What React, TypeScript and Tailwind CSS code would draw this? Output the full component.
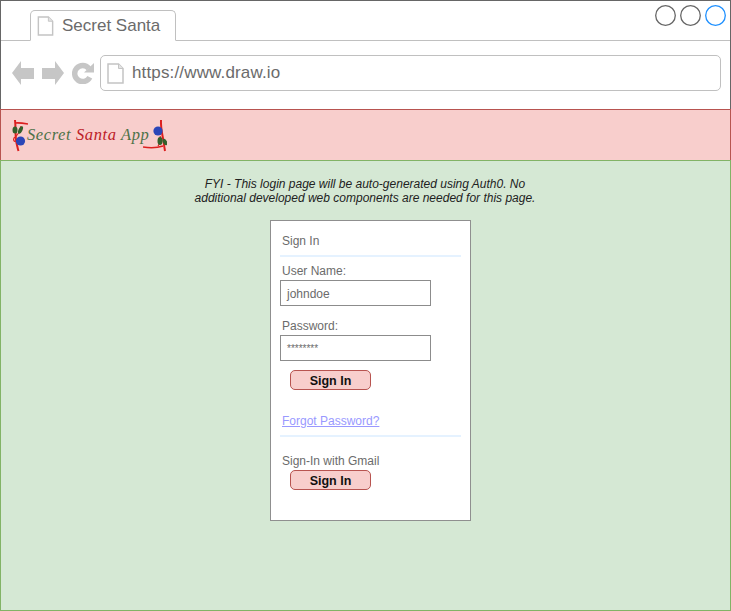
const font = "[font-family:'Liberation_Sans',Arial,sans-serif]";

const PageIcon = ({ className }: { className: string }) => (
    <svg viewBox="0 0 17 21" className={className} fill="none" stroke="#c4c4c4" strokeWidth="1.5">
        <path d="M1 1h10.5l4.5 4.5V20H1z" fill="#fff" />
        <path d="M11.5 1v4.5H16" fill="#e4e4e4" strokeWidth="1" />
    </svg>
);

const NavIcons = () => (
    <div className="flex items-center gap-[8px] ml-[11px] mr-[6px]">
        <svg viewBox="0 0 22 24" className="w-[22px] h-[24px]">
            <path d="M0 12 9 0v7h13v11H9v6z" fill="#c6c6c6" />
        </svg>
        <svg viewBox="0 0 22 24" className="w-[22px] h-[24px]">
            <path d="M22 12 13 0v7H0v11h13v6z" fill="#c6c6c6" />
        </svg>
        <svg viewBox="0 0 22 22" className="w-[22px] h-[22px]">
            <path d="M17.800 15.200a8 8 0 1 1-1-8.800" fill="none" stroke="#c6c6c6" strokeWidth="5.500" />
            <path d="M12 10.500 22 1v9.500z" fill="#c6c6c6" />
        </svg>
    </div>
);

const WindowButton = ({ active }: { active?: boolean }) => (
    <svg viewBox="0 0 21 21" className="w-[21px] h-[21px]" fill="none">
        <circle cx="10.500" cy="10.500" r="9.800" stroke={active ? '#1e90ff' : '#666666'} strokeWidth="1.300" />
    </svg>
);

const LeftRibbon = () => (
    <svg viewBox="0 0 16 33" className="w-[16px] h-[33px] shrink-0">
        <path d="M3 1c1 8 0 16 1.500 23 .8 3 1 5 2 8" fill="none" stroke="#dc1f1f" strokeWidth="2" />
        <path d="M3.500 4C7 3.500 10 4 16 5" fill="none" stroke="#dc1f1f" strokeWidth="1.600" />
        <path d="M9 7C8 12 5 17 2 19c-1 2 0 4 2 3" fill="none" stroke="#dc1f1f" strokeWidth="1.200" />
        <ellipse cx="3" cy="11" rx="2.500" ry="3.500" fill="#33602c" />
        <ellipse cx="8.500" cy="11" rx="2" ry="4" transform="rotate(25 8.500 11)" fill="#33602c" />
        <circle cx="8.500" cy="22" r="4.600" fill="#2b46b8" />
    </svg>
);

const RightRibbon = () => (
    <svg viewBox="0 0 24 33" className="w-[24px] h-[33px] shrink-0">
        <path d="M18 1c-.5 8 1.500 15 2.500 21 .5 4 .8 6 1.500 10" fill="none" stroke="#dc1f1f" strokeWidth="2" />
        <path d="M0 28c6 1 14 1 20-1" fill="none" stroke="#dc1f1f" strokeWidth="1.700" />
        <path d="M17 17c2 3 1 6-2 10" fill="none" stroke="#dc1f1f" strokeWidth="1.200" />
        <ellipse cx="17" cy="22" rx="2.500" ry="4" fill="#33602c" />
        <ellipse cx="22" cy="23" rx="2" ry="3.500" transform="rotate(-25 22 23)" fill="#33602c" />
        <circle cx="15" cy="12" r="4.600" fill="#2b46b8" />
    </svg>
);

const Logo = () => (
    <div className="flex items-center h-[36px] w-[156px]">
        <LeftRibbon />
        <div className="-ml-[1px] mt-[1px] w-[123px] shrink-0 whitespace-nowrap text-[16.500px] tracking-[0.6px] italic text-[#4d7248] [font-family:'Liberation_Serif',serif]">
            Secret <span className="text-[#bd2027]">Santa</span> App
        </div>
        <div className="-ml-[7px]">
            <RightRibbon />
        </div>
    </div>
);

const Divider = ({ className }: { className: string }) => (
    <div className={`h-[2px] bg-[#e5f2ff] mx-[9px] ${className}`} />
);

const Label = ({ children, className = '' }: { children: string; className?: string }) => (
    <div className={`text-[12px] leading-[14px] text-[#6b6b6b] ml-[11px] ${className}`}>{children}</div>
);

const Field = ({ value, className = '' }: { value: string; className?: string }) => (
    <div className={`w-[151px] h-[26px] ml-[9px] border border-[#8c8c8c] flex items-center pl-[6px] text-[#6b6b6b] ${className}`}>
        {value}
    </div>
);

const SignInButton = ({ className = '' }: { className?: string }) => (
    <div className={`w-[81px] h-[20px] ml-[19px] pt-[2px] rounded-[5px] bg-[#f8cecc] border border-[#b85450] flex items-center justify-center text-[12.500px] font-bold text-[#111111] ${className}`}>
        Sign In
    </div>
);

export default function App() {
    return (
        <div className={`w-[731px] h-[611px] flex flex-col bg-white overflow-hidden ${font}`}>
            {/* Browser chrome */}
            <div className="h-[109px] shrink-0 border-t border-l border-r border-[#666666] flex flex-col">
                <div className="h-[40px] shrink-0 border-b border-[#c0c0c0] flex items-end justify-between">
                    <div className="w-[146px] h-[31px] ml-[29px] -mb-[1px] bg-white border border-b-white border-[#c0c0c0] rounded-t-[5px] flex items-center pl-[6px] gap-[8px]">
                        <PageIcon className="w-[17px] h-[20px] mt-[1px]" />
                        <span className="text-[17px] text-[#6b6b6b] mt-[1px]">Secret Santa</span>
                    </div>
                    <div className="flex gap-[4px] mb-[14px] mr-[4px]">
                        <WindowButton />
                        <WindowButton />
                        <WindowButton active />
                    </div>
                </div>
                <div className="flex-1 flex items-center pb-[4px]">
                    <NavIcons />
                    <div className="w-[621px] h-[36px] border border-[#c0c0c0] rounded-[5px] flex items-center pl-[6px] gap-[8px]">
                        <PageIcon className="w-[17px] h-[21px]" />
                        <span className="text-[17px] tracking-[0.15px] text-[#6b6b6b]">https://www.draw.io</span>
                    </div>
                </div>
            </div>

            {/* App header */}
            <div className="h-[52px] shrink-0 bg-[#f8cecc] border border-[#b85450] flex items-center pl-[11px]">
                <Logo />
            </div>

            {/* Login page */}
            <div className="flex-1 -mt-[1px] bg-[#d5e8d4] border border-[#82b366] flex flex-col">
                <p className="mt-[16px] ml-[184px] w-[360px] text-center text-[12px] leading-[14px] italic text-[#222222]">
                    FYI - This login page will be auto-generated using Auth0. No additional developed web components are needed for this page.
                </p>
                <div className="w-[201px] h-[301px] mt-[15px] ml-[269px] bg-white border border-[#8f8f8f] flex flex-col">
                    <Label className="mt-[13px]">Sign In</Label>
                    <Divider className="mt-[7px]" />
                    <Label className="mt-[7px]">User Name:</Label>
                    <Field value="johndoe" className="mt-[2px] pt-[1px] text-[12px]" />
                    <Label className="mt-[13px]">Password:</Label>
                    <Field value="********" className="mt-[2px] text-[10px]" />
                    <SignInButton className="mt-[9px]" />
                    <a className="text-[12px] leading-[14px] text-[#9999ff] underline ml-[11px] mt-[24px]">Forgot Password?</a>
                    <Divider className="mt-[7px]" />
                    <Label className="mt-[17px]">Sign-In with Gmail</Label>
                    <SignInButton className="mt-[2px]" />
                </div>
            </div>
        </div>
    );
}
